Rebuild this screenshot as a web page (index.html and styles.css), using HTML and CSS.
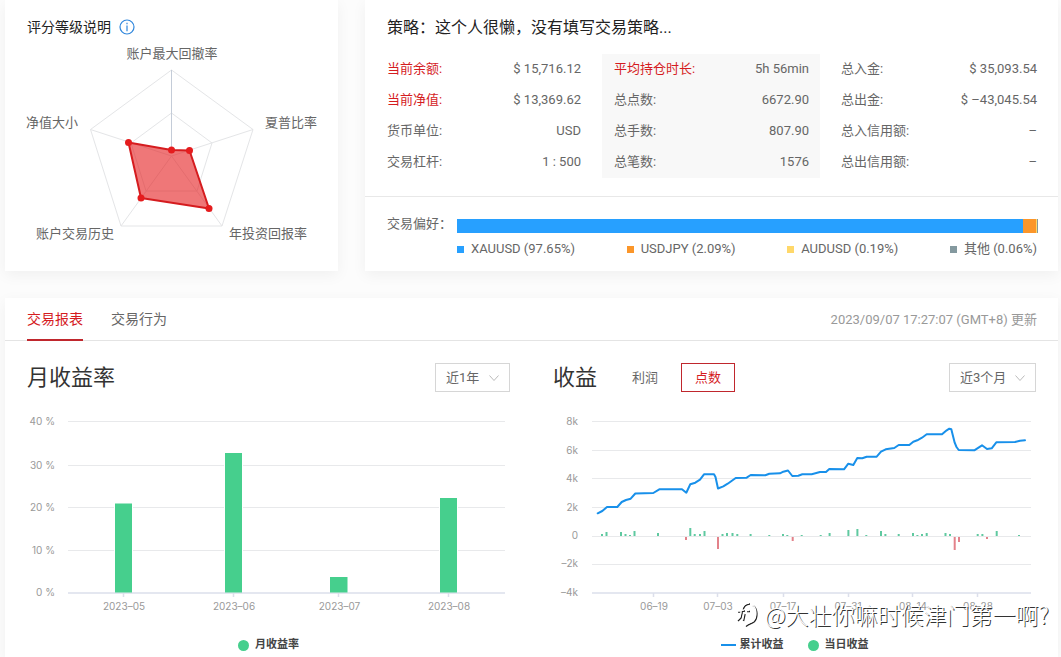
FILE: index.html
```html
<!DOCTYPE html>
<html lang="zh-CN">
<head>
<meta charset="utf-8">
<title>交易报表</title>
<link rel="stylesheet" href="styles.css">
</head>
<body>
<main class="page">
  <section class="card score">
    <h2 class="score-title">评分等级说明
      <svg class="info" viewBox="0 0 16 16" aria-hidden="true"><circle cx="8" cy="8" r="7"/><path d="M8 6.6v5.6M8 3.8v1.4"/></svg>
    </h2>
    <svg class="radar" viewBox="5 39 333 218" role="img">
      <path class="web" d="M171.5 70L253 129.5L222 226H121L90.5 129.5ZM171.5 113L212 143L197 191H146L131 143ZM171.5 156L253 129.5M171.5 156L222 226M171.5 156L121 226M171.5 156L90.5 129.5"/>
      <path class="spoke" d="M171.5 70V150"/>
      <path class="area" d="M171.5 150L189.5 150.500L209 208.500L141 198L128.500 142.500Z"/>
      <g class="dots"><circle cx="171.5" cy="150" r="3.500"/><circle cx="189.500" cy="150.500" r="3.500"/><circle cx="209" cy="208.500" r="3.500"/><circle cx="141" cy="198" r="3.500"/><circle cx="128.500" cy="142.500" r="3.500"/></g>
      <g class="radar-labels">
        <text x="172" y="58" text-anchor="middle">账户最大回撤率</text>
        <text x="265" y="127">夏普比率</text>
        <text x="229" y="238">年投资回报率</text>
        <text x="114" y="238" text-anchor="end">账户交易历史</text>
        <text x="78" y="127" text-anchor="end">净值大小</text>
      </g>
    </svg>
  </section>

  <section class="card account">
    <div class="summary">
      <h2 class="strategy">策略：这个人很懒，没有填写交易策略...</h2>
      <div class="stats">
        <dl class="stat-list">
          <div class="stat hot"><dt>当前余额:</dt><dd>$ 15,716.12</dd></div>
          <div class="stat hot"><dt>当前净值:</dt><dd>$ 13,369.62</dd></div>
          <div class="stat"><dt>货币单位:</dt><dd>USD</dd></div>
          <div class="stat"><dt>交易杠杆:</dt><dd>1 : 500</dd></div>
        </dl>
        <dl class="stat-list shaded">
          <div class="stat hot"><dt>平均持仓时长:</dt><dd>5h 56min</dd></div>
          <div class="stat"><dt>总点数:</dt><dd>6672.90</dd></div>
          <div class="stat"><dt>总手数:</dt><dd>807.90</dd></div>
          <div class="stat"><dt>总笔数:</dt><dd>1576</dd></div>
        </dl>
        <dl class="stat-list">
          <div class="stat"><dt>总入金:</dt><dd>$ 35,093.54</dd></div>
          <div class="stat"><dt>总出金:</dt><dd>$ –43,045.54</dd></div>
          <div class="stat"><dt>总入信用额:</dt><dd>–</dd></div>
          <div class="stat"><dt>总出信用额:</dt><dd>–</dd></div>
        </dl>
      </div>
    </div>
    <div class="preference">
      <span class="pref-label">交易偏好：</span>
      <div class="share-bar">
        <span class="blue" style="flex-grow:97.65"></span><span class="orange" style="flex-grow:2.09"></span><span class="yellow" style="flex-grow:0.19"></span><span class="grey" style="flex-grow:0.06"></span>
      </div>
      <ul class="share-legend">
        <li><i class="swatch blue"></i>XAUUSD (97.65%)</li>
        <li><i class="swatch orange"></i>USDJPY (2.09%)</li>
        <li><i class="swatch yellow"></i>AUDUSD (0.19%)</li>
        <li><i class="swatch grey"></i>其他 (0.06%)</li>
      </ul>
    </div>
  </section>

  <section class="card report">
    <header class="tabs">
      <button class="tab active" type="button">交易报表</button>
      <button class="tab" type="button">交易行为</button>
      <time class="updated">2023/09/07 17:27:07 (GMT+8) 更新</time>
    </header>
    <div class="charts">
      <article>
        <div class="chart-head">
          <h3>月收益率</h3>
          <div class="picker year">
            <select aria-label="月收益率区间"><option>近1年</option></select>
            <svg viewBox="0 0 10 6" aria-hidden="true"><path d="M.5.5L5 5.500L9.500.5"/></svg>
          </div>
        </div>
        <svg class="chart" viewBox="27 404 483 220" role="img">
          <path class="grid" d="M68 421.5H505M68 465.5H505M68 507.5H505M68 550.5H505"/>
          <path class="gap" d="M114 507.5h19M224 465.500h19M224 507.500h19M224 550.500h19M114 550.500h19M439 507.500h19M439 550.500h19"/>
          <path class="axis" d="M68 593H505M123.500 593v4M233.500 593v4M338.500 593v4M448.500 593v4"/>
          <g class="bars"><rect x="115" y="503.500" width="17" height="89"/><rect x="225" y="453" width="17" height="139.500"/><rect x="330" y="577" width="17.500" height="15.500"/><rect x="440" y="498" width="17" height="94.500"/></g>
          <g class="ticks" text-anchor="end">
            <text x="55" y="425">40 %</text><text x="55" y="469">30 %</text><text x="55" y="511">20 %</text><text x="55" y="554">10 %</text><text x="55" y="596">0 %</text>
          </g>
          <g class="ticks" text-anchor="middle">
            <text x="124" y="610">2023–05</text><text x="234" y="610">2023–06</text><text x="339.500" y="610">2023–07</text><text x="449" y="610">2023–08</text>
          </g>
        </svg>
        <div class="legend"><span><i class="dot"></i>月收益率</span></div>
      </article>

      <article>
        <div class="chart-head">
          <h3>收益</h3>
          <div class="switch">
            <button type="button">利润</button>
            <button type="button" class="on">点数</button>
          </div>
          <div class="picker months">
            <select aria-label="收益区间"><option>近3个月</option></select>
            <svg viewBox="0 0 10 6" aria-hidden="true"><path d="M.5.5L5 5.500L9.500.5"/></svg>
          </div>
        </div>
        <svg class="chart" viewBox="553 404 483 220" role="img">
          <path class="grid" d="M592 421.5H1031M592 450.5H1031M592 478.5H1031M592 507.5H1031M592 536.5H1031M592 564.5H1031"/>
          <path class="axis" d="M592 593H1031M653.500 593v4M717.500 593v4M783.500 593v4M848.500 593v4M912.500 593v4M977.500 593v4"/>
          <path class="gain" d="M602 536v-2M606.500 536v-4M621 536v-4M625.500 536v-2M630 536v-1M634.500 536v-5M658 536v-3M690.300 536v-8M694.700 536v-2M700 536v-2M704.500 536v-5M722.500 536v-2M727 536v-3M732.500 536v-3M737.300 536v-2M750.600 536v-2M769.300 536v-1M783 536v-2M787.300 536v-1M801.700 536v-1M820.700 536v-1M829.600 536v-3M848.400 536v-6M857.400 536v-7M866.300 536v-1M881 536v-5M885.400 536v-2M898.700 536v-2M913 536v-3M917.400 536v-1M922 536v-2M926.700 536v-3M945.500 536v-3M950 536v-2M977.700 536v-2M982.400 536v-2M996.700 536v-5M1019 536v-1"/>
          <path class="loss" d="M686 537v3M718 537v12M792.700 537v4M954.700 537v13M959 537v5M987 537v2"/>
          <path class="total" d="M597.7 513.3L602.3 511L607 507H617.3L621.7 502L626 500L630.7 498.7L635.3 493.5L653.3 493L659.3 489.3H682L686.3 492.7L690.3 484.3L695.3 482.7L700 479.7L704 474.3H714L715.500 477L718 488.5L723.3 486.3L727.7 483.7L735.7 478L746.7 477.7L750.7 475L765.3 475.3L769.3 473.7L780 473.3L783.3 471.7L788 470.5L792.3 476L798.3 475.7L802.3 474.3H811.7L820 472H826L829.3 469L844 469.3L848.3 463.7L853.3 465L857.3 458L862.3 458.3L866.7 456.7H876.7L881 451.7L885.7 449.3L894.3 448L898.7 445H909.3L913.3 441.7L917.3 440.3L922 437.7L926.7 434.3H942L946.7 430.3L949.3 428.7L951.3 429.3L954.7 442.7L956.500 447L958.7 450L974.3 450.3L982 445.3L987 449L991.7 448.3L996.3 442.3L1015 442L1020 440.7L1025 440.3"/>
          <g class="ticks" text-anchor="end">
            <text x="578" y="425">8k</text><text x="578" y="454">6k</text><text x="578" y="482">4k</text><text x="578" y="511">2k</text><text x="578" y="539">0</text><text x="578" y="567">–2k</text><text x="578" y="596">–4k</text>
          </g>
          <g class="ticks" text-anchor="middle">
            <text x="654" y="610">06–19</text><text x="718" y="610">07–03</text><text x="783" y="610">07–17</text><text x="848" y="610">07–31</text><text x="913" y="610">08–14</text><text x="978" y="610">08–28</text>
          </g>
        </svg>
        <div class="legend"><span><i class="dash"></i>累计收益</span><span><i class="dot"></i>当日收益</span></div>
      </article>
    </div>
    <div class="watermark">
      <svg viewBox="0 0 22 26" aria-hidden="true"><path d="M13 2C8 2 6.500 5 5.500 9L4 16L1 19M1 10L8 9M8 12L6.500 19M16 3.500C21 7 21 16 17 20C14 22 11 22 9 24.500M10 9.500h3"/></svg>
      <span>@大壮你嘛时候津门第一啊?</span>
    </div>
  </section>
</main>
</body>
</html>
```
FILE: styles.css
```css
* { box-sizing: border-box; }

body {
  margin: 0;
  background: #fcfcfc;
  color: #666;
  font: 13px/20px Roboto, "Noto Sans CJK SC", sans-serif;
}

h2, h3, dl, dd, ul { margin: 0; padding: 0; font-weight: 400; }
button, select { font: inherit; color: inherit; background: none; border: 0; border-radius: 0; padding: 0; }
svg { fill: none; }

.page {
  display: grid;
  grid-template-columns: 333fr 693fr;
  gap: 27px;
  padding: 0 3px 0 5px;
}

.card {
  min-width: 0;
  background: #fff;
  box-shadow: 0 4px 14px rgba(0, 0, 0, 0.05);
}

/* Score */
.score-title {
  display: flex;
  align-items: center;
  gap: 8px;
  padding: 15px 22px 0;
  color: #222;
  font-size: 14px;
  line-height: 24px;
}
.info { width: 16px; height: 16px; stroke: #2f86dc; stroke-width: 1.2; }
.radar, .chart { display: block; width: 100%; height: auto; }
.web { stroke: #e4e5e7; }
.spoke { stroke: #c4ccd8; }
.area { fill: rgba(229, 28, 30, 0.6); stroke: #d51c1f; stroke-width: 2; stroke-linejoin: round; }
.dots { fill: #e51c1e; }
.radar-labels { fill: #666; font-size: 13px; }

/* Account */
.summary { padding: 16px 21px 18px 22px; border-bottom: 1px solid #e8e8e8; }
.strategy { color: #222; font-size: 16px; line-height: 24px; }
.stats {
  display: grid;
  grid-template-columns: 194fr 218fr 196fr;
  gap: 21px;
  margin-top: 14px;
}
.stat {
  display: flex;
  justify-content: space-between;
  padding-bottom: 2px;
  line-height: 29px;
  white-space: nowrap;
}
.stat-list.shaded { padding: 0 11px 0 12px; background: #f8f8f8; }
.stat.hot dt { color: #d51c1f; }
.preference {
  display: grid;
  grid-template-columns: 70px 1fr;
  align-items: end;
  row-gap: 6px;
  padding: 18px 21px 12px 22px;
}
.pref-label { line-height: 18px; white-space: nowrap; }
.share-bar { display: flex; height: 14px; }
.share-legend {
  grid-column: 2;
  display: flex;
  justify-content: space-between;
  list-style: none;
}
.share-legend li { display: flex; align-items: center; }
.swatch { width: 7px; height: 7px; margin-right: 7px; }
.blue { background: #27a0ff; }
.orange { background: #fb962a; }
.yellow { background: #ffd86a; }
.grey { background: #84999f; }

/* Report */
.report { position: relative; grid-column: 1 / -1; }
.tabs {
  display: flex;
  gap: 28px;
  padding: 0 21px 0 22px;
  border-bottom: 1px solid #e4e4e4;
}
.tab { height: 43px; margin-bottom: -1px; border-bottom: 2px solid transparent; font-size: 14px; }
.tab.active { color: #d51c1f; border-color: #c0272d; }
.updated { margin-left: auto; color: #999; line-height: 43px; height: 42px; }

.charts {
  display: grid;
  grid-template-columns: 1fr 1fr;
  gap: 43px;
  padding: 22px 22px 3px;
}
.chart-head { display: flex; align-items: center; height: 29px; margin-bottom: 12px; }
.chart-head h3 { color: #333; font-size: 22px; line-height: 29px; }
.switch { display: flex; gap: 9px; margin-left: 21px; }
.switch button { width: 54px; height: 29px; border: 1px solid transparent; }
.switch .on { color: #d51c1f; border-color: #c0272d; }
.picker { position: relative; margin-left: auto; }
.picker select {
  width: 100%;
  height: 29px;
  padding-left: 10px;
  border: 1px solid #d6d6d6;
  background: #fff;
  appearance: none;
}
.picker svg { position: absolute; top: 12px; right: 11px; width: 10px; height: 6px; stroke: #bbb; pointer-events: none; }
.year { width: 75px; }
.months { width: 87px; }

.grid { stroke: #e8e9eb; }
.gap { stroke: #fff; }
.axis { stroke: #dcdfeb; stroke-width: 1.5; }
.bars { fill: #46cf8d; }
.ticks { fill: #999; font: 10px Inter, sans-serif; }
.gain { stroke: #5fc9a0; stroke-width: 2; }
.loss { stroke: #e3828a; stroke-width: 2; }
.total { stroke: #1890ea; stroke-width: 2; stroke-linejoin: round; stroke-linecap: round; }

.legend {
  display: flex;
  justify-content: center;
  gap: 24px;
  margin-top: 11px;
  color: #444;
  font-size: 11px;
  font-weight: 700;
}
.legend span { display: flex; align-items: center; }
.dot { width: 11px; height: 11px; margin-right: 6px; border-radius: 50%; background: #46cf8d; }
.dash { width: 15px; height: 2px; margin-right: 4px; background: #1890ea; }

.watermark {
  position: absolute;
  right: 9px;
  bottom: 28px;
  display: flex;
  align-items: center;
  gap: 7px;
  color: #fff;
  font: 300 23px/32px "Noto Sans CJK SC", sans-serif;
  white-space: nowrap;
  text-shadow: 1px 1px 0 #333;
}
.watermark svg { width: 22px; height: 26px; stroke: #fff; stroke-width: 1.5; filter: drop-shadow(1px 1px 0 #222); }
```
